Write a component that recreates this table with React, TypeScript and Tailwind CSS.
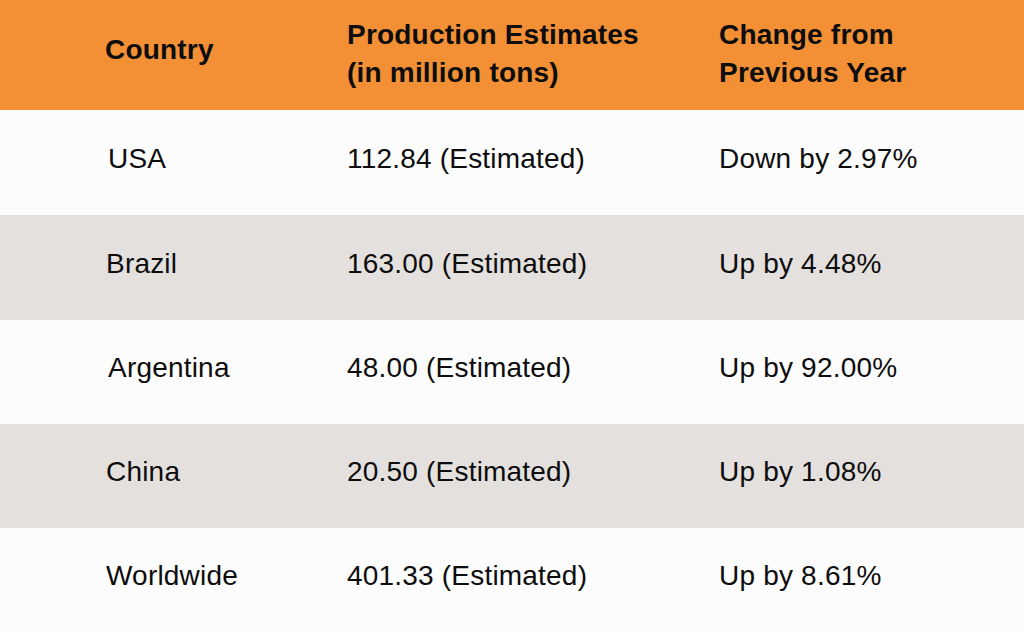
const rows = [
  { country: "USA", est: "112.84 (Estimated)", change: "Down by 2.97%", h: "h-[105px]", bg: "bg-[#fdfcfd]", pl: "pl-[108px]" },
  { country: "Brazil", est: "163.00 (Estimated)", change: "Up by 4.48%", h: "h-[105px]", bg: "bg-[#e3e0de]", pl: "pl-[106px]" },
  { country: "Argentina", est: "48.00 (Estimated)", change: "Up by 92.00%", h: "h-[104px]", bg: "bg-[#fdfcfd]", pl: "pl-[108px]" },
  { country: "China", est: "20.50 (Estimated)", change: "Up by 1.08%", h: "h-[104px]", bg: "bg-[#e3e0de]", pl: "pl-[106px]" },
  { country: "Worldwide", est: "401.33 (Estimated)", change: "Up by 8.61%", h: "h-[103px]", bg: "bg-[#fdfcfd]", pl: "pl-[106px]" },
];

export default function App() {
  return (
    <div className="w-[1024px] h-[631px] overflow-hidden bg-[#fdfcfd] text-[#0d0d0d] font-['Liberation_Sans',Arial,sans-serif] text-[28px] tracking-[0.2px]">
      <div className="grid grid-cols-[347px_372px_1fr] h-[110px] bg-[#f39035] font-bold leading-[38px] items-center">
        <div className="pl-[105px] -mt-[10px]">Country</div>
        <div className="-mt-[2px]">
          Production Estimates
          <br />
          (in million tons)
        </div>
        <div className="-mt-[2px]">
          Change from
          <br />
          Previous Year
        </div>
      </div>
      {rows.map((r) => (
        <div key={r.country} className={`grid grid-cols-[347px_372px_1fr] items-center pb-[8px] ${r.h} ${r.bg}`}>
          <div className={r.pl}>{r.country}</div>
          <div>{r.est}</div>
          <div>{r.change}</div>
        </div>
      ))}
    </div>
  );
}
